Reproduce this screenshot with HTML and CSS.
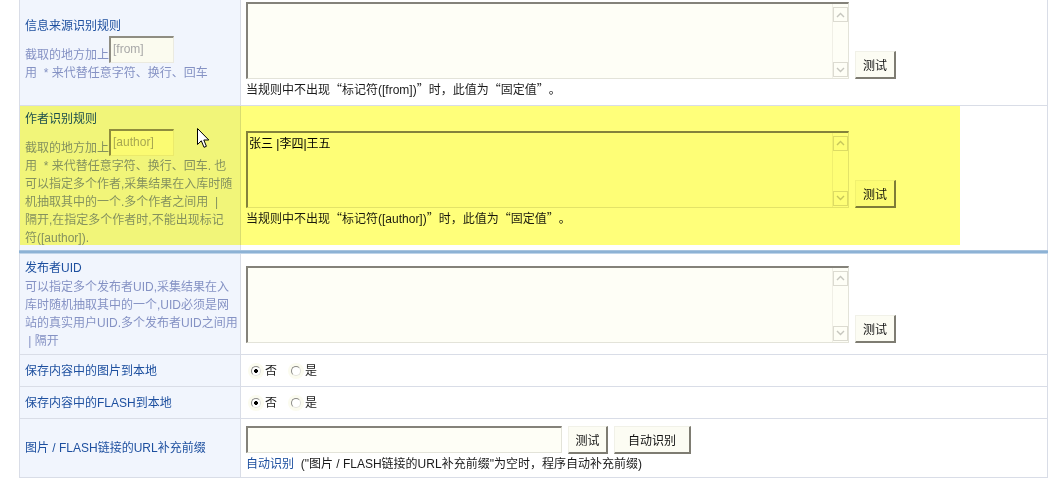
FILE: index.html
```html
<!DOCTYPE html>
<html lang="zh-CN">
<head>
<meta charset="utf-8">
<title>采集规则</title>
<link rel="stylesheet" href="styles.css">
</head>
<body>
<div class="form">
  <!-- row 1 -->
  <div class="cell lab">
    <div class="ttl">信息来源识别规则</div>
    <div class="desc">截取的地方加上<span class="tag">[from]</span><br>用 &nbsp;* 来代替任意字符、换行、回车</div>
  </div>
  <div class="cell val">
    <div class="line">
      <div class="ta"><textarea class="ta-in"></textarea><div class="sb"><span class="sbb"><svg width="9" height="6" viewBox="0 0 9 6"><polyline points="1,5 4.5,1.5 8,5" fill="none" stroke="#c6c6be" stroke-width="1.4"/></svg></span><span class="sbb"><svg width="9" height="6" viewBox="0 0 9 6"><polyline points="1,1 4.5,4.5 8,1" fill="none" stroke="#c6c6be" stroke-width="1.4"/></svg></span></div></div>
      <button class="btn">测试</button>
    </div>
    <div class="note">当规则中不出现<span class="q">“</span>标记符([from])<span class="q">”</span>时，此值为<span class="q">“</span>固定值<span class="q">”</span>。</div>
  </div>

  <!-- row 2 (highlighted) -->
  <div class="cell lab hl">
    <div class="ttl">作者识别规则</div>
    <div class="desc">截取的地方加上<span class="tag">[author]</span><br>用 &nbsp;* 来代替任意字符、换行、回车. 也<br>可以指定多个作者,采集结果在入库时随<br>机抽取其中的一个.多个作者之间用 &nbsp;|<br>隔开,在指定多个作者时,不能出现标记<br>符([author]).</div>
    <div class="yl"></div>
    <svg class="cursor" width="13" height="21" viewBox="0 0 13 21"><path d="M0.5 0.5 L0.5 16.5 L4.3 12.8 L7 19.3 L9.4 18.3 L6.8 12 L11.8 12 Z" fill="#fff" stroke="#000" stroke-width="1" stroke-linejoin="miter"/></svg>
  </div>
  <div class="cell val hl">
    <div class="line">
      <div class="ta"><textarea class="ta-in">张三 |李四|王五</textarea><div class="sb"><span class="sbb"><svg width="9" height="6" viewBox="0 0 9 6"><polyline points="1,5 4.5,1.5 8,5" fill="none" stroke="#c6c6be" stroke-width="1.4"/></svg></span><span class="sbb"><svg width="9" height="6" viewBox="0 0 9 6"><polyline points="1,1 4.5,4.5 8,1" fill="none" stroke="#c6c6be" stroke-width="1.4"/></svg></span></div></div>
      <button class="btn">测试</button>
    </div>
    <div class="note">当规则中不出现<span class="q">“</span>标记符([author])<span class="q">”</span>时，此值为<span class="q">“</span>固定值<span class="q">”</span>。</div>
  </div>

  <div class="sep"></div>

  <!-- row 3 -->
  <div class="cell lab">
    <div class="ttl">发布者UID</div>
    <div class="desc">可以指定多个发布者UID,采集结果在入<br>库时随机抽取其中的一个,UID必须是网<br>站的真实用户UID.多个发布者UID之间用<br>&nbsp;| 隔开</div>
  </div>
  <div class="cell val">
    <div class="line">
      <div class="ta"><textarea class="ta-in"></textarea><div class="sb"><span class="sbb"><svg width="9" height="6" viewBox="0 0 9 6"><polyline points="1,5 4.5,1.5 8,5" fill="none" stroke="#c6c6be" stroke-width="1.4"/></svg></span><span class="sbb"><svg width="9" height="6" viewBox="0 0 9 6"><polyline points="1,1 4.5,4.5 8,1" fill="none" stroke="#c6c6be" stroke-width="1.4"/></svg></span></div></div>
      <button class="btn">测试</button>
    </div>
  </div>

  <!-- row 4 -->
  <div class="cell lab"><div class="ttl">保存内容中的图片到本地</div></div>
  <div class="cell val">
    <div class="opts"><span class="opt"><span class="rb on"></span>否</span><span class="opt"><span class="rb"></span>是</span></div>
  </div>

  <!-- row 5 -->
  <div class="cell lab"><div class="ttl">保存内容中的FLASH到本地</div></div>
  <div class="cell val">
    <div class="opts"><span class="opt"><span class="rb on"></span>否</span><span class="opt"><span class="rb"></span>是</span></div>
  </div>

  <!-- row 6 -->
  <div class="cell lab"><div class="ttl">图片 / FLASH链接的URL补充前缀</div></div>
  <div class="cell val">
    <div class="line line6">
      <input class="url" type="text">
      <button class="btn b1">测试</button>
      <button class="btn b2">自动识别</button>
    </div>
    <div class="note"><span class="link">自动识别</span> &nbsp;("图片 / FLASH链接的URL补充前缀"为空时，程序自动补充前缀)</div>
  </div>
</div>
</body>
</html>
```

FILE: styles.css
```css
* { box-sizing: border-box; }

body {
  margin: 0;
  background: #ffffff;
  font-family: "Liberation Sans", "Noto Sans CJK SC", sans-serif;
  font-size: 12px;
  color: #1a1a1a;
  overflow: hidden;
}

.form {
  display: grid;
  grid-template-columns: 222px 807px;
  grid-template-rows: 112px 144px 4px 101px 32px 32px 59px;
  width: 1029px;
  margin: -6px 0 0 19px;
}

.cell {
  display: flex;
  flex-direction: column;
  justify-content: center;
  border-bottom: 1px solid #d9dde7;
}

.lab {
  background: #f1f5fd;
  border-left: 1px solid #d9dde7;
  border-right: 1px solid #d9dde7;
  padding: 0 5px;
}

.val {
  border-right: 1px solid #d9dde7;
  padding: 0 5px;
  align-items: flex-start;
}

.hl {
  border-bottom: 0;
  position: relative;
}

.sep {
  grid-column: 1 / span 2;
  background: linear-gradient(#a7c3de 0 1px, #8db2d5 1px 3px, #bfd4e9 3px);
}

.ttl {
  color: #1d4f9f;
  line-height: 18px;
  white-space: nowrap;
}

.desc {
  color: #8592c4;
  line-height: 18px;
  white-space: nowrap;
  margin-top: 1px;
}

.tag {
  display: inline-block;
  width: 65px;
  height: 27px;
  vertical-align: -4px;
  overflow: hidden;
  border-style: solid;
  border-width: 2px 1px 1px 2px;
  border-color: #8f8d82 #ebeae0 #ebeae0 #8f8d82;
  background: #fbfbef;
  color: #a8a8a8;
  line-height: 22px;
  padding-left: 2px;
}

.yl {
  position: absolute;
  left: 0;
  top: 0;
  width: 940px;
  height: 139px;
  background: #ffff7a;
  mix-blend-mode: multiply;
  z-index: 2;
  pointer-events: none;
}

.cursor {
  position: absolute;
  left: 177px;
  top: 22px;
  z-index: 3;
}

/* right column controls */
.line {
  display: flex;
  align-items: flex-end;
  gap: 6px;
}

.ta {
  width: 603px;
  height: 77px;
  display: flex;
  border-style: solid;
  border-width: 2px 1px 1px 2px;
  border-color: #84827a #e3e3d9 #e3e3d9 #84827a;
  background: #fefef6;
}

.ta-in {
  flex: 1;
  border: 0;
  margin: 0;
  background: transparent;
  resize: none;
  outline: none;
  overflow: hidden;
  font-family: "Liberation Sans", "Noto Sans CJK SC", sans-serif;
  font-size: 12px;
  line-height: 16px;
  color: #000;
  padding: 3px 1px;
}

.sb {
  width: 16px;
  display: flex;
  flex-direction: column;
  justify-content: space-between;
  padding: 3px 0 1px;
  border-left: 1px solid #f0efe6;
}

.sbb {
  width: 15px;
  height: 15px;
  border: 1px solid #dcdbd1;
  display: flex;
  align-items: center;
  justify-content: center;
}

.btn {
  height: 28px;
  margin: 0;
  padding: 0 7px;
  font-family: "Liberation Sans", "Noto Sans CJK SC", sans-serif;
  font-size: 12px;
  color: #111;
  background: #fcfcf3;
  border-style: solid;
  border-width: 1px 2px 2px 1px;
  border-color: #f1f1e8 #7e7c72 #7e7c72 #f1f1e8;
}

.note {
  margin-top: 3px;
  line-height: 14px;
  white-space: nowrap;
  color: #1a1a1a;
}

.q {
  font-family: "Noto Sans CJK SC", sans-serif;
  display: inline-block;
  width: 12px;
  text-align: center;
}

.link { color: #1d4f9f; }

.opts {
  display: flex;
  align-items: center;
  padding-left: 5px;
}

.opt {
  display: inline-flex;
  align-items: center;
  gap: 4px;
  margin-right: 14px;
  line-height: 16px;
}

.rb {
  width: 10px;
  height: 10px;
  border-radius: 50%;
  border: 1px solid;
  border-color: #8a8a86 #e2e2dc #e2e2dc #8a8a86;
  background: #ffffff;
  box-shadow: 0 0 0 3px #fbfbef;
}

.rb.on {
  background: radial-gradient(circle, #000 0 1.6px, #fff 2.2px);
}

.line6 { gap: 0; }

.url {
  width: 316px;
  height: 27px;
  margin: 0 0 1px 0;
  border-style: solid;
  border-width: 2px 1px 1px 2px;
  border-color: #84827a #e3e3d9 #e3e3d9 #84827a;
  background: #fefef6;
  outline: none;
}

.b1 { margin-left: 6px; width: 40px; padding: 0; }
.b2 { margin-left: 6px; width: 77px; padding: 0; }
```
